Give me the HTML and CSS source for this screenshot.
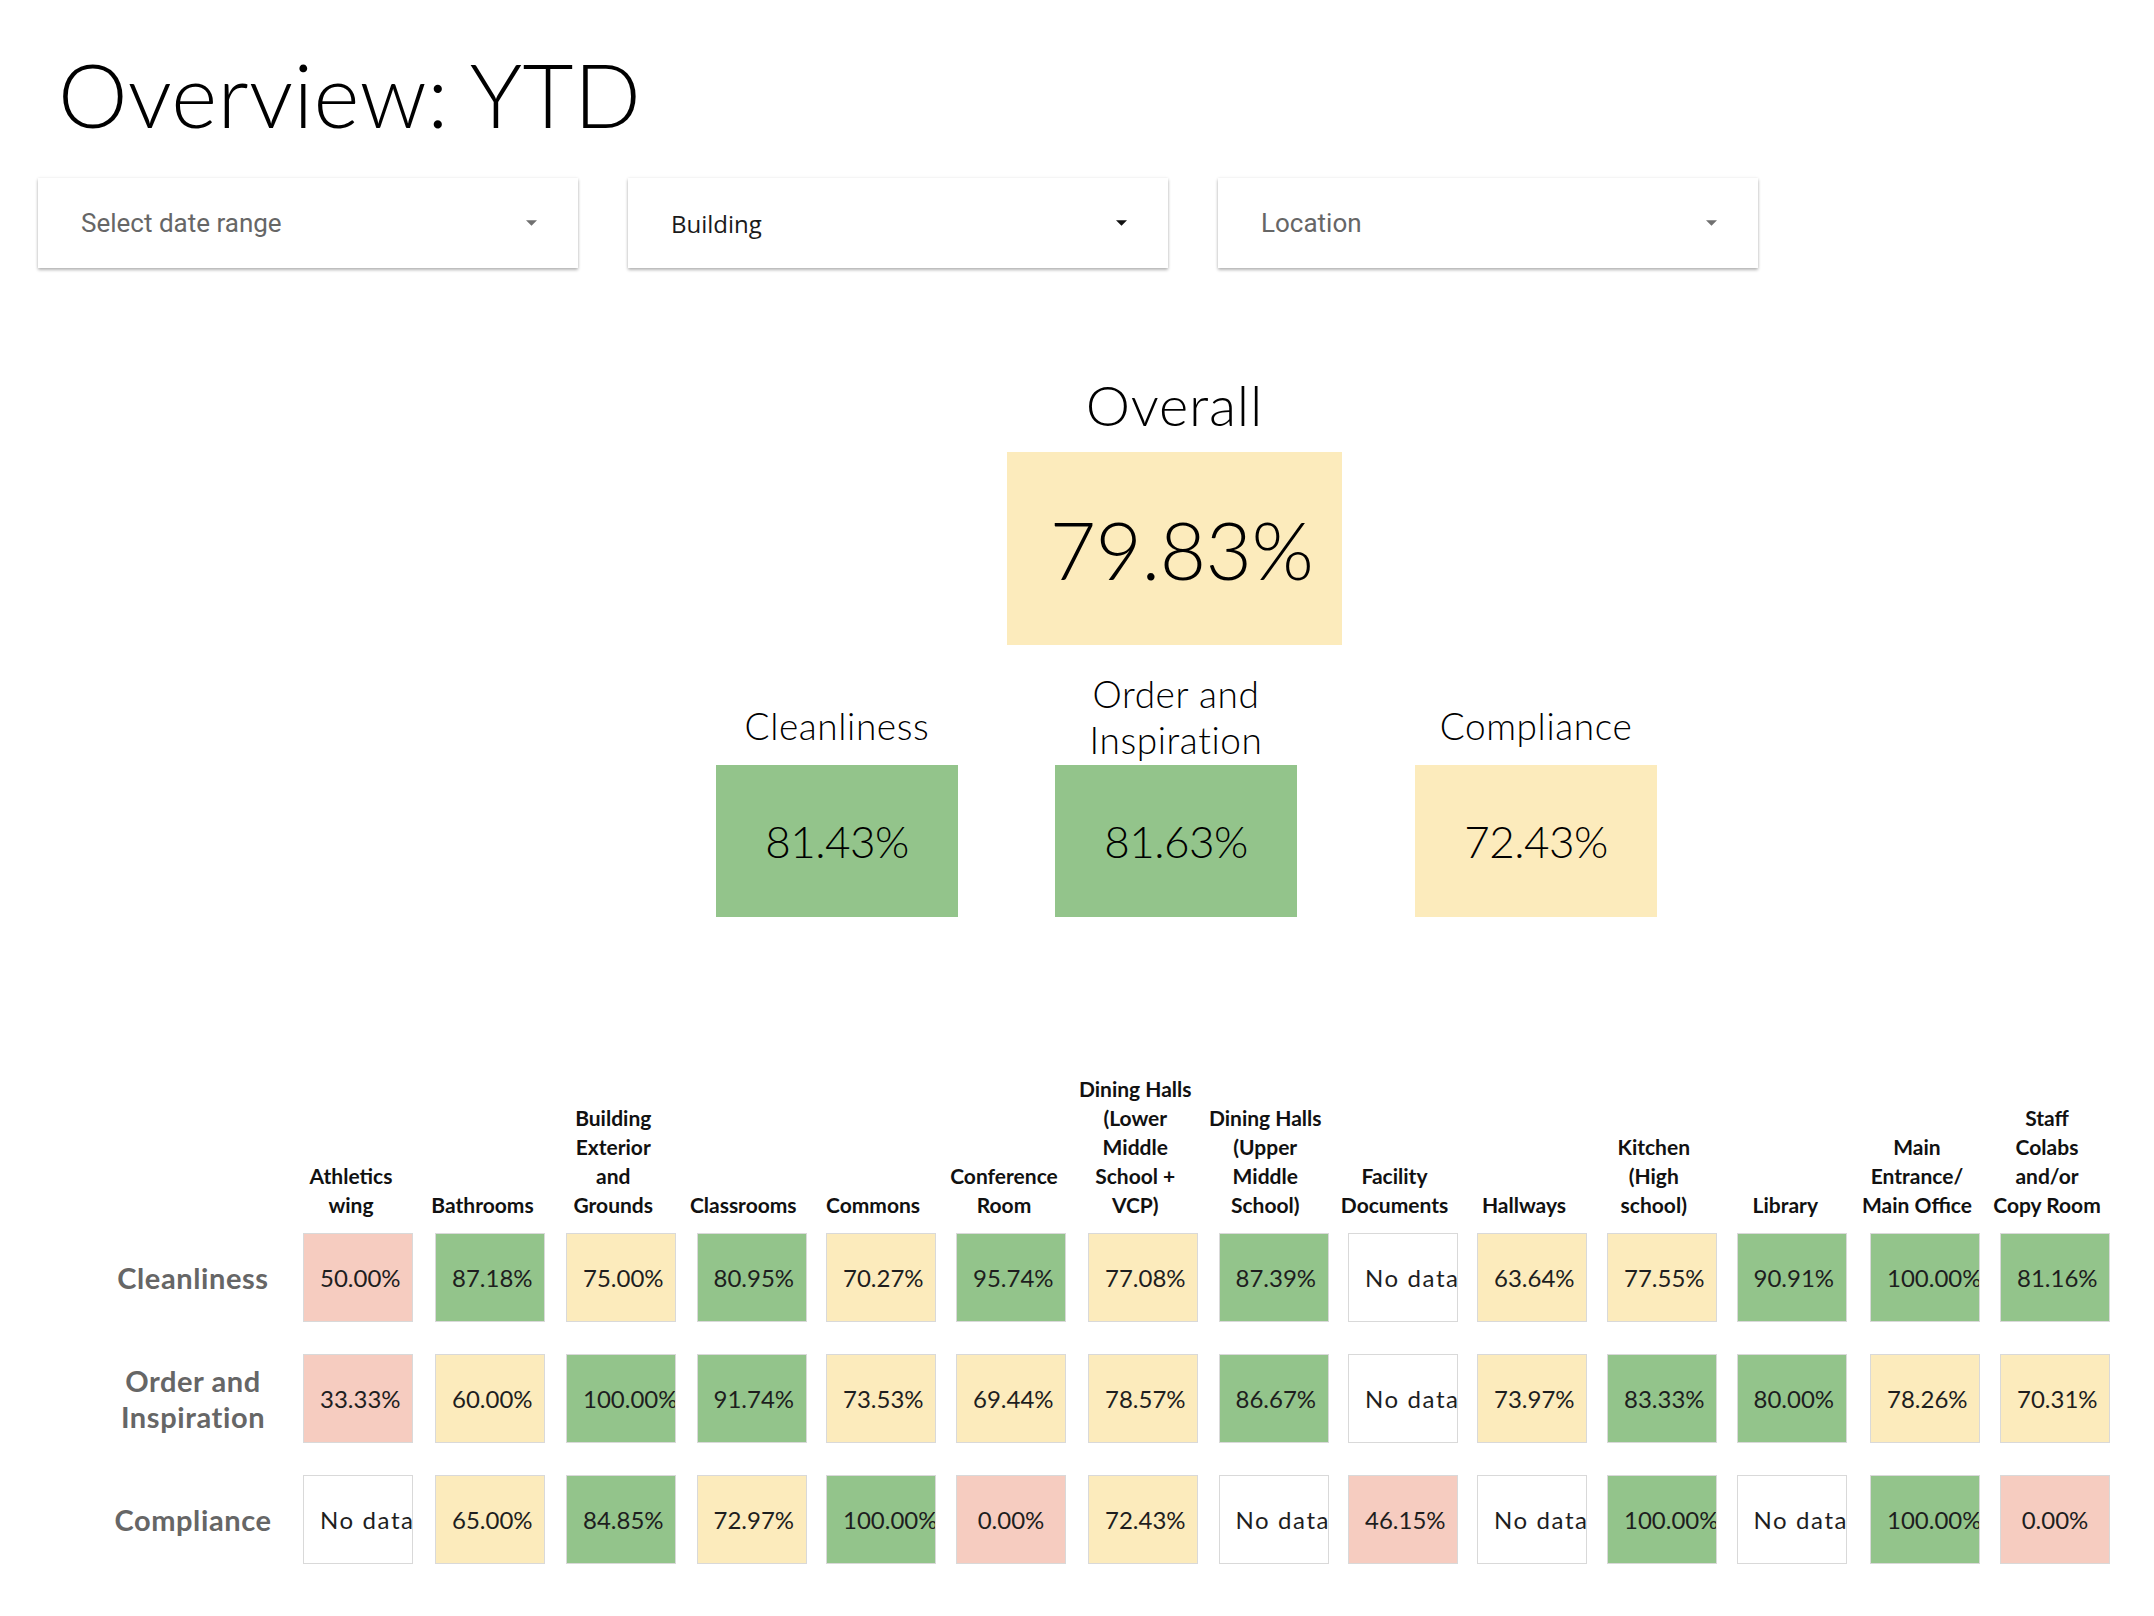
FILE: index.html
```html
<!DOCTYPE html>
<html lang="en">
<head>
<meta charset="utf-8">
<title>Overview: YTD</title>
<link rel="stylesheet" href="styles.css">
</head>
<body>
<main class="page">
  <h1 class="title">Overview: YTD</h1>

  <div class="filters">
    <div class="select placeholder"><span class="select-text">Select date range</span><svg class="arrow" viewBox="0 0 10 5" width="11" height="6"><path d="M0 0 L10 0 L5 5 Z"/></svg></div>
    <div class="select chosen"><span class="select-text">Building</span><svg class="arrow" viewBox="0 0 10 5" width="11" height="6"><path d="M0 0 L10 0 L5 5 Z"/></svg></div>
    <div class="select placeholder"><span class="select-text">Location</span><svg class="arrow" viewBox="0 0 10 5" width="11" height="6"><path d="M0 0 L10 0 L5 5 Z"/></svg></div>
  </div>

  <section class="summary">
    <div class="overall">
      <div class="overall-label">Overall</div>
      <div class="overall-box yellow">79.83%</div>
    </div>
    <div class="subrow">
      <div class="sub">
        <div class="sub-label one-line">Cleanliness</div>
        <div class="sub-box green">81.43%</div>
      </div>
      <div class="sub">
        <div class="sub-label">Order and<br>Inspiration</div>
        <div class="sub-box green">81.63%</div>
      </div>
      <div class="sub sub-last">
        <div class="sub-label one-line">Compliance</div>
        <div class="sub-box yellow">72.43%</div>
      </div>
    </div>
  </section>

  <section class="matrix">
    <div class="mgrid mhead">
      <div class="corner"></div>
      <div class="colhead">Athletics<br>wing</div>
      <div class="colhead">Bathrooms</div>
      <div class="colhead">Building<br>Exterior<br>and<br>Grounds</div>
      <div class="colhead">Classrooms</div>
      <div class="colhead">Commons</div>
      <div class="colhead">Conference<br>Room</div>
      <div class="colhead">Dining Halls<br>(Lower<br>Middle<br>School +<br>VCP)</div>
      <div class="colhead">Dining Halls<br>(Upper<br>Middle<br>School)</div>
      <div class="colhead">Facility<br>Documents</div>
      <div class="colhead">Hallways</div>
      <div class="colhead">Kitchen<br>(High<br>school)</div>
      <div class="colhead">Library</div>
      <div class="colhead">Main<br>Entrance/<br>Main Office</div>
      <div class="colhead">Staff<br>Colabs<br>and/or<br>Copy Room</div>
    </div>
    <div class="mgrid mbody">
      <div class="rowhead">Cleanliness</div>
      <div class="cell pink">50.00%</div>
      <div class="cell green">87.18%</div>
      <div class="cell yellow">75.00%</div>
      <div class="cell green">80.95%</div>
      <div class="cell yellow">70.27%</div>
      <div class="cell green">95.74%</div>
      <div class="cell yellow">77.08%</div>
      <div class="cell green">87.39%</div>
      <div class="cell empty">No data</div>
      <div class="cell yellow">63.64%</div>
      <div class="cell yellow">77.55%</div>
      <div class="cell green">90.91%</div>
      <div class="cell green">100.00%</div>
      <div class="cell green">81.16%</div>

      <div class="rowhead">Order and Inspiration</div>
      <div class="cell pink">33.33%</div>
      <div class="cell yellow">60.00%</div>
      <div class="cell green">100.00%</div>
      <div class="cell green">91.74%</div>
      <div class="cell yellow">73.53%</div>
      <div class="cell yellow">69.44%</div>
      <div class="cell yellow">78.57%</div>
      <div class="cell green">86.67%</div>
      <div class="cell empty">No data</div>
      <div class="cell yellow">73.97%</div>
      <div class="cell green">83.33%</div>
      <div class="cell green">80.00%</div>
      <div class="cell yellow">78.26%</div>
      <div class="cell yellow">70.31%</div>

      <div class="rowhead">Compliance</div>
      <div class="cell empty">No data</div>
      <div class="cell yellow">65.00%</div>
      <div class="cell green">84.85%</div>
      <div class="cell yellow">72.97%</div>
      <div class="cell green">100.00%</div>
      <div class="cell pink">0.00%</div>
      <div class="cell yellow">72.43%</div>
      <div class="cell empty">No data</div>
      <div class="cell pink">46.15%</div>
      <div class="cell empty">No data</div>
      <div class="cell green">100.00%</div>
      <div class="cell empty">No data</div>
      <div class="cell green">100.00%</div>
      <div class="cell pink">0.00%</div>
    </div>
  </section>
</main>
</body>
</html>
```

FILE: styles.css
```css
* { box-sizing: border-box; }

html, body {
  margin: 0;
  padding: 0;
  background: #ffffff;
}

body {
  font-family: "Lato", "Open Sans", sans-serif;
  color: #000;
}

.page {
  width: 2154px;
  min-height: 1616px;
  overflow: hidden;
}

.title {
  margin: 44px 0 0 0;
  padding-left: 58px;
  font-family: "Lato", sans-serif;
  font-weight: 300;
  font-size: 88px;
  letter-spacing: 0.4px;
  line-height: 100px;
  color: #000;
}

/* ---------- filters ---------- */
.filters {
  display: flex;
  gap: 50px;
  margin-top: 34px;
  padding-left: 38px;
}

.select {
  width: 540px;
  height: 90px;
  background: #fff;
  display: flex;
  align-items: center;
  justify-content: space-between;
  padding: 0 41px 0 43px;
  box-shadow: 0 2px 3px rgba(0, 0, 0, 0.28), 0 0 3px rgba(0, 0, 0, 0.08);
}

.select-text {
  font-family: "Roboto", sans-serif;
  font-size: 26px;
  color: #666;
}

.select.chosen .select-text {
  font-family: "Open Sans", sans-serif;
  font-size: 24px;
  color: #1a1a1a;
}

.arrow { fill: #707070; display: block; }
.select.chosen .arrow { fill: #111; }

/* ---------- summary ---------- */
.summary {
  padding-left: 195px;
  margin-top: 105px;
}

.overall {
  display: flex;
  flex-direction: column;
  align-items: center;
}

.overall-label {
  font-weight: 300;
  font-size: 56px;
  letter-spacing: 0.8px;
  line-height: 64px;
}

.overall-box {
  margin-top: 15px;
  width: 335px;
  height: 193px;
  padding-left: 14px;
  display: flex;
  align-items: center;
  justify-content: center;
  font-weight: 300;
  font-size: 80px;
  letter-spacing: -0.5px;
}

.subrow {
  display: flex;
  justify-content: center;
  gap: 97px;
  margin-top: 26px;
  padding-left: 24px;
}

.sub {
  width: 242px;
  display: flex;
  flex-direction: column;
  align-items: stretch;
}

.sub-last { margin-left: 21px; }

.sub-label {
  height: 94px;
  display: flex;
  align-items: flex-end;
  justify-content: center;
  text-align: center;
  font-weight: 300;
  font-size: 37px;
  letter-spacing: 0.6px;
  line-height: 46px;
  white-space: nowrap;
  padding-bottom: 2px;
}

.sub-label.one-line { padding-bottom: 16px; }

.sub-box {
  height: 152px;
  display: flex;
  align-items: center;
  justify-content: center;
  font-weight: 300;
  font-size: 44px;
  letter-spacing: -0.5px;
}

/* ---------- matrix ---------- */
.matrix {
  margin-top: 156px;
  padding-left: 95px;
}

.mgrid {
  display: grid;
  grid-template-columns: 190px 132px 131px 130.5px 129.5px 130px 132px 130.5px 129.5px 129px 130px 129.5px 133.5px 130px 130px;
}

.mhead {
  height: 146px;
  margin-bottom: 14px;
}

.colhead {
  align-self: end;
  text-align: center;
  font-weight: 700;
  font-size: 21px;
  line-height: 29px;
  color: #111;
  white-space: nowrap;
}

.mbody {
  row-gap: 32px;
}

.rowhead {
  align-self: center;
  text-align: center;
  font-weight: 700;
  font-size: 29px;
  letter-spacing: 0.6px;
  line-height: 36px;
  color: #666;
  padding: 0 8px 0 14px;
}

.cell {
  margin-left: 18px;
  width: 110px;
  height: 89px;
  border: 1px solid #d9d9d9;
  padding: 0 16px;
  overflow: hidden;
  white-space: nowrap;
  text-align: center;
  font-weight: 400;
  font-size: 24px;
  line-height: 87px;
  color: #1e1e1e;
}

.cell.empty {
  text-align: left;
  letter-spacing: 1.6px;
}

.green { background: #93c48b; }
.yellow { background: #fcebbc; }
.pink { background: #f6ccc0; }
.empty { background: #ffffff; }
```
